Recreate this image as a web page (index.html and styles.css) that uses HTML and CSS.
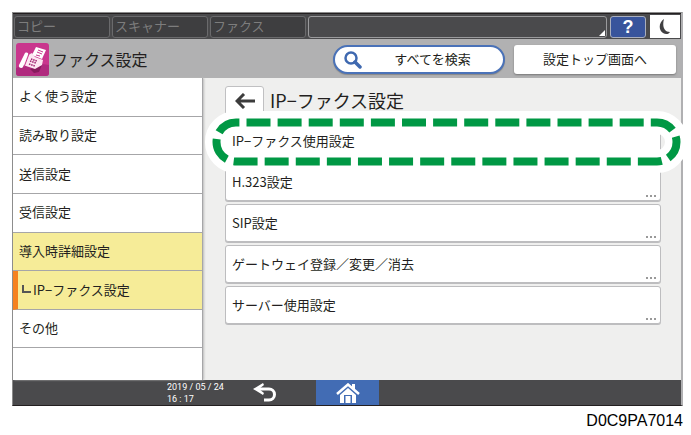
FILE: index.html
```
<!DOCTYPE html>
<html lang="ja">
<head>
    <meta charset="UTF-8">
    <meta name="viewport" content="width=device-width, initial-scale=1.0">
    <title>ファクス設定</title>
    <link rel="stylesheet" href="styles.css">
</head>
<body>
    <div class="panel">
        <!-- status bar -->
        <div class="topbar">
            <button class="tab" disabled>コピー</button>
            <button class="tab" disabled>スキャナー</button>
            <button class="tab" disabled>ファクス</button>
            <button class="status" aria-label="状態"></button>
            <button class="help">?</button>
            <button class="sleep" aria-label="スリープ">
                <svg width="12" height="16" viewBox="0 0 12 16">
                    <path d="M5 0C0 3-1 11 4 14c3 2 6 1 7-1C5 13 3 7 5 0z" fill="#414042"/>
                </svg>
            </button>
        </div>

        <header class="header">
            <svg class="app-icon" width="33" height="33" viewBox="0 0 33 33">
                <rect width="33" height="33" rx="3" fill="#c9368d"/>
                <path d="M0 25L13 19 33 22v8a3 3 0 0 1-3 3H3a3 3 0 0 1-3-3z" fill="#b02a7e"/>
                <path d="M14 26l12-4-3 7-5 1z" fill="#861b5d"/>
                <path d="M20 4l10 3-4 9-10-4z" fill="#fff"/>
                <path d="M22 7l5 2M21 9l5 2M20 12l4 1" stroke="#c9368d" stroke-width="1"/>
                <path d="M12 12l4-2 3 4 8 3-1 5-7 4-12-4z" fill="#fde6f2"/>
                <path d="M9 10c2-1 4 0 3 2L7 24c-1 2-5 1-4-2z" fill="#fff"/>
                <path d="M13 11L8 24" stroke="#c9368d" stroke-width="1"/>
                <path d="M15 16l6 2M14 18l6 2M13 21l6 2" stroke="#a12873" stroke-width="1.500" stroke-dasharray="1.500 .8"/>
            </svg>
            <h1>ファクス設定</h1>
            <button class="search">
                <svg width="18" height="18" viewBox="0 0 18 18" fill="none" stroke="#3f69b0">
                    <circle cx="7" cy="7" r="5.5" stroke-width="2.5"/>
                    <path d="M11 11l5 5" stroke-width="3.5" stroke-linecap="round"/>
                </svg>
                <span>すべてを検索</span>
            </button>
            <button class="to-top">設定トップ画面へ</button>
        </header>

        <div class="content">
            <nav class="sidebar">
                <a href="#">よく使う設定</a>
                <a href="#">読み取り設定</a>
                <a href="#">送信設定</a>
                <a href="#">受信設定</a>
                <a href="#" class="open">導入時詳細設定</a>
                <a href="#" class="open current">IP−ファクス設定</a>
                <a href="#">その他</a>
            </nav>

            <main class="main">
                <div class="heading">
                    <button class="back" aria-label="戻る">
                        <svg width="20" height="16" viewBox="0 0 20 16" fill="none" stroke="#3c3c3c" stroke-width="3">
                            <path d="M9 1L2 8l7 7M2 8h18"/>
                        </svg>
                    </button>
                    <h2>IP−ファクス設定</h2>
                </div>
                <div class="list">
                    <div class="marked">
                        <button class="item">IP−ファクス使用設定</button>
                        <!-- green dashed frame -->
                        <svg class="frame">
                            <rect class="halo" x="11.500" y="11.500" rx="19.500"/>
                            <rect class="dashes" x="11.500" y="11.500" rx="19.500"/>
                        </svg>
                    </div>
                    <button class="item">H.323設定</button>
                    <button class="item">SIP設定</button>
                    <button class="item">ゲートウェイ登録／変更／消去</button>
                    <button class="item">サーバー使用設定</button>
                </div>
            </main>
        </div>

        <footer class="footer">
            <time datetime="2019-05-24T16:17">2019 / 05 / 24<br>16 : 17</time>
            <button class="return" aria-label="戻る">
                <svg width="24" height="19" viewBox="0 0 24 19">
                    <path d="M5 6h11a5 5 0 0 1 0 11H11" fill="none" stroke="#fff" stroke-width="3"/>
                    <path d="M0 6L10 0l1 2-5 4 5 4-1 2z" fill="#fff"/>
                </svg>
            </button>
            <button class="home" aria-label="ホーム">
                <svg width="24" height="20" viewBox="0 0 24 20">
                    <path d="M1 11L12 1.500 23 11" fill="none" stroke="#fff" stroke-width="2.500"/>
                    <path d="M16 1h3v6l-3-3z" fill="#fff"/>
                    <path d="M4 12l8-7 8 7v8h-4v-8H8v8H4z" fill="#fff"/>
                    <path d="M9.500 13h5v7h-5z" fill="#fff"/>
                </svg>
            </button>
        </footer>
    </div>
    <p class="code">D0C9PA7014</p>
</body>
</html>
```
FILE: styles.css
```
* {
    margin: 0;
    padding: 0;
    box-sizing: border-box;
}

body {
    padding: 12px 8px 0 12px;
    background: #fff;
    color: #231f20;
    font-family: "Noto Sans CJK JP", sans-serif;
    font-size: 13px;
}

button {
    border: 0;
    background: #fff;
    color: inherit;
    font: inherit;
}

svg {
    display: block;
    flex: none;
}

.panel {
    border: 1px solid #8a8a8a;
    border-right: 2px solid #b0b0b2;
    border-bottom-color: #231f20;
}

/* status bar */
.topbar {
    display: flex;
    align-items: center;
    gap: 2px;
    height: 26px;
    padding: 0 1px;
    background: #4a4a4c;
    border-top: 1px solid #231f20;
}

.tab {
    width: 96px;
    height: 22px;
    padding: 0 0 2px 2px;
    border: 1px solid #6a6a6c;
    border-radius: 3px;
    background: #3e3e40;
    color: #7d7d7d;
    line-height: 18px;
    text-align: left;
}

.status {
    position: relative;
    flex: 1;
    height: 22px;
    border: 1px solid #9a9a9c;
    border-radius: 3px;
    background: #4a4a4c;
}

.status::after {
    content: "";
    position: absolute;
    right: 1px;
    bottom: 1px;
    border: 3px solid transparent;
    border-right-color: #fff;
    border-bottom-color: #fff;
}

.help {
    width: 36px;
    height: 22px;
    margin-left: 1px;
    border: 1px solid #a9aebd;
    border-radius: 3px;
    background: #38549c;
    color: #fff;
    font-family: "Liberation Sans", Arial, sans-serif;
    font-size: 18px;
    font-weight: 700;
    line-height: 18px;
}

.sleep {
    display: flex;
    align-items: center;
    justify-content: center;
    width: 30px;
    height: 23px;
    margin-left: 2px;
}

/* header */
.header {
    display: flex;
    align-items: center;
    height: 39px;
    padding: 2px 5px 0 3px;
    background: #b1b1b2;
}

.header h1 {
    flex: 1;
    margin-left: 3px;
    padding-bottom: 2px;
    font-size: 16px;
    font-weight: 400;
}

.search {
    display: flex;
    align-items: center;
    width: 172px;
    height: 29px;
    margin-right: 9px;
    padding-left: 9px;
    border: 2px solid #4a72b8;
    border-radius: 15px;
    box-shadow: 0 1px 1px #888;
}

.search span {
    flex: 1;
    padding-bottom: 2px;
}

.to-top {
    width: 162px;
    height: 29px;
    padding-bottom: 2px;
    border-radius: 3px;
    box-shadow: 0 1px 2px #777;
}

/* menu */
.content {
    display: flex;
    background: #efefee;
}

.sidebar {
    display: flex;
    flex-direction: column;
    width: 190px;
    background: #fff;
    border-right: 1px solid #a6a6a8;
    box-shadow: 1px 0 2px #bbb;
}

.sidebar a {
    flex: 5;
    display: flex;
    align-items: center;
    padding: 0 0 2px 6px;
    border-bottom: 1px solid #a6a6a8;
    color: inherit;
    text-decoration: none;
}

.sidebar::after {
    content: "";
    flex: 4 0 3px;
}

.sidebar .open {
    background: #f6ec98;
}

.sidebar .current {
    padding-left: 4px;
    border-left: 5px solid #f58220;
}

.current::before {
    content: "";
    width: 7px;
    height: 6px;
    margin-right: 2px;
    border: solid #555;
    border-width: 0 0 2px 2px;
}

/* settings */
.main {
    flex: 1;
    padding: 8px 20px 56px 22px;
}

.heading {
    display: flex;
    align-items: center;
    gap: 6px;
    height: 30px;
    margin-bottom: 6px;
}

.heading h2 {
    padding-bottom: 2px;
    font-size: 18px;
    font-weight: 400;
}

.back {
    display: flex;
    align-items: center;
    justify-content: center;
    width: 39px;
    height: 30px;
    border: 1px solid #c0c0c2;
    border-radius: 3px;
}

.list {
    display: grid;
    gap: 3px;
}

.item {
    position: relative;
    width: 100%;
    height: 38px;
    padding: 0 0 2px 6px;
    border: 1px solid #bdbdbf;
    border-radius: 3px;
    box-shadow: 0 1px 0 #bdbdbf;
    text-align: left;
}

.item::after {
    content: "";
    position: absolute;
    right: 12px;
    bottom: 3px;
    width: 2px;
    height: 2px;
    background: #999;
    box-shadow: 4px 0 #999, 8px 0 #999;
}

.marked {
    position: relative;
    z-index: 1;
}

.frame {
    position: absolute;
    top: -11px;
    left: -20px;
    width: calc(100% + 47px);
    height: 62px;
    fill: none;
    pointer-events: none;
}

.frame rect {
    width: calc(100% - 23px);
    height: 39px;
}

.halo {
    stroke: #fff;
    stroke-width: 23px;
}

.dashes {
    stroke: #009844;
    stroke-width: 8px;
    stroke-dasharray: 24 7.1;
    stroke-dashoffset: -10.5;
}

/* footer */
.footer {
    display: flex;
    align-items: center;
    height: 25px;
    padding-left: 154px;
    background: #4a4a4c;
    color: #fff;
}

.footer time {
    width: 86px;
    font-family: Roboto, "Noto Sans CJK JP", sans-serif;
    font-size: 9px;
    line-height: 12px;
}

.return {
    background: none;
}

.home {
    display: flex;
    align-items: center;
    justify-content: center;
    width: 63px;
    height: 25px;
    margin-left: 39px;
    background: #426cb4;
}

.code {
    margin-top: 6px;
    color: #000;
    font-family: "Liberation Sans", Arial, sans-serif;
    font-size: 16px;
    line-height: 18px;
    text-align: right;
}
```
